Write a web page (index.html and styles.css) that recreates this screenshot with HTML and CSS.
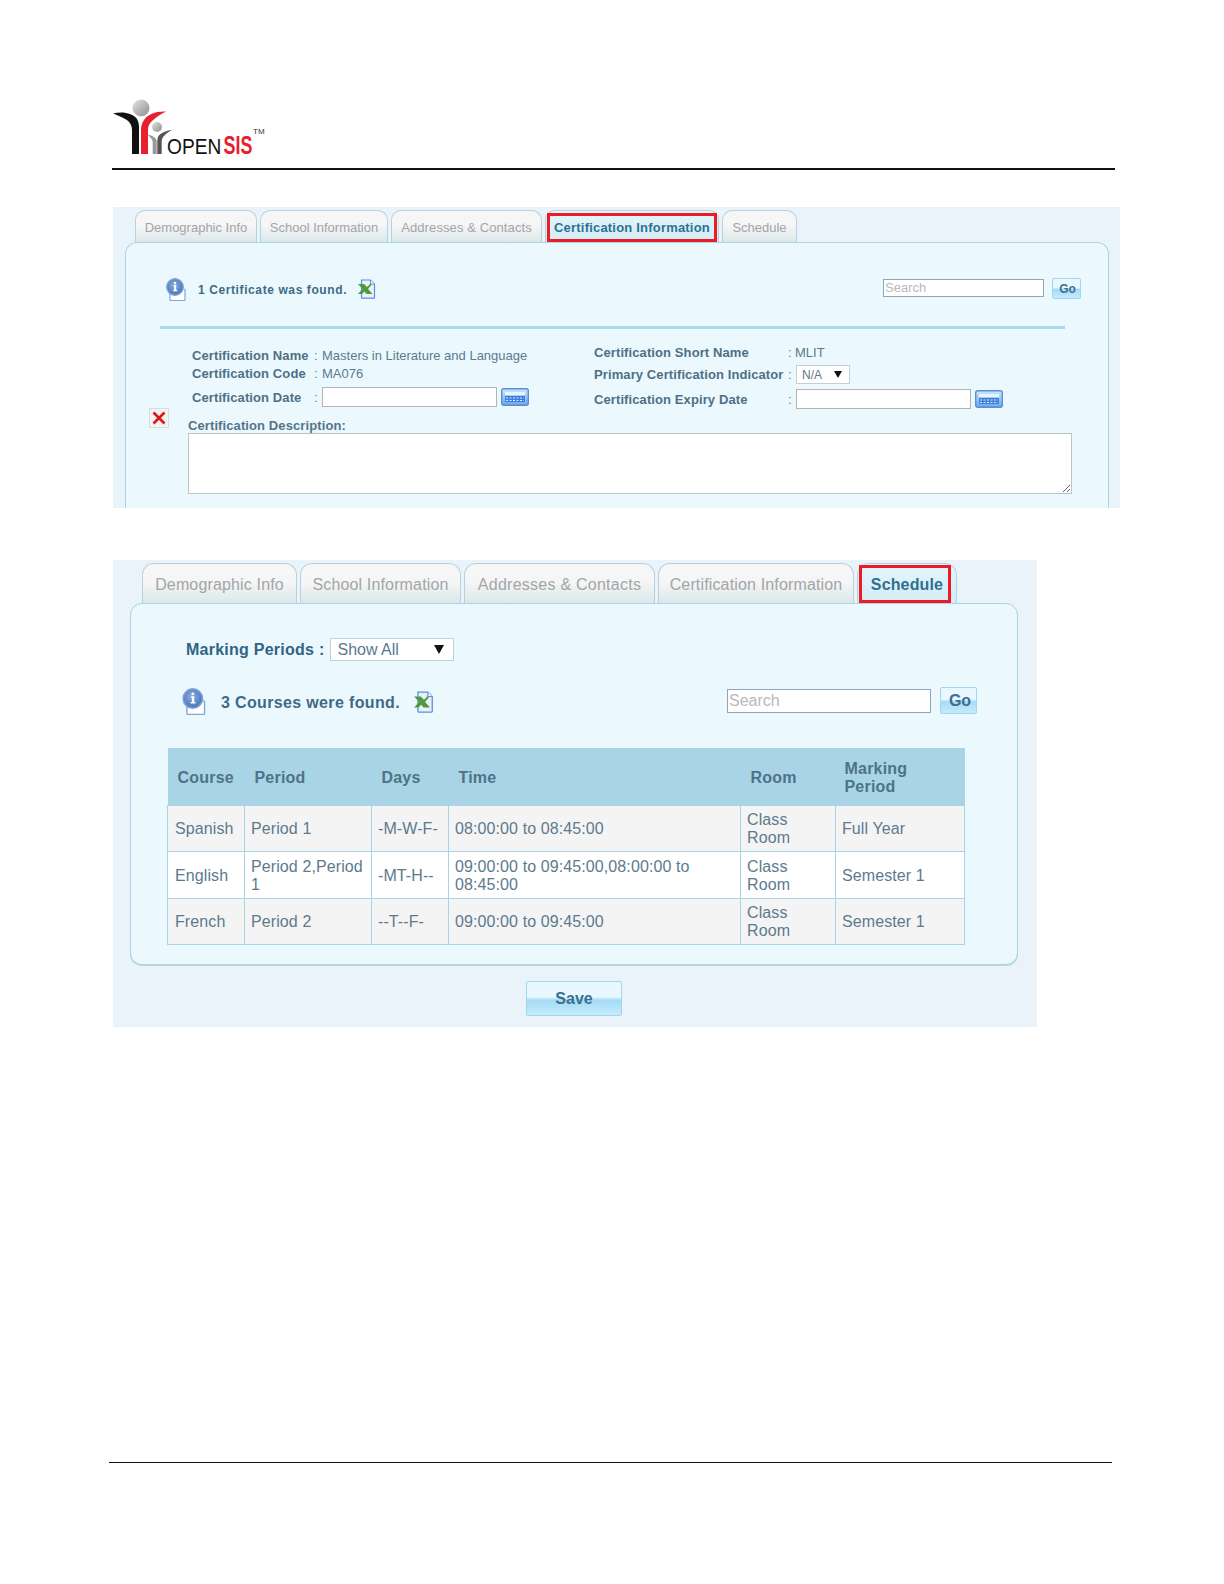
FILE: index.html
```html
<!DOCTYPE html>
<html lang="en">
<head>
<meta charset="utf-8">
<title>openSIS</title>
<link rel="stylesheet" href="styles.css">
</head>
<body>
<svg class="defs" width="0" height="0" aria-hidden="true">
  <defs>
    <linearGradient id="ball" x1="0" y1="0" x2="1" y2="1"><stop offset="0" stop-color="#e4e4e4"/><stop offset="1" stop-color="#8d8d8d"/></linearGradient>
    <radialGradient id="infoGrad" cx=".45" cy=".4" r=".65"><stop offset="0" stop-color="#8fb0e0"/><stop offset="1" stop-color="#3f6db4"/></radialGradient>
    <linearGradient id="calGrad" x1="0" y1="0" x2="0" y2="1"><stop offset="0" stop-color="#cfe6fb"/><stop offset="1" stop-color="#6aa8ec"/></linearGradient>
    <symbol id="i-info" viewBox="0 0 20 23">
      <path d="M4 11h14a1 1 0 0 1 1 1v9.500a1 1 0 0 1-1 1H5a1 1 0 0 1-1-1z" fill="#fff" stroke="#7fa8dc" stroke-width="1.200"/>
      <circle cx="9" cy="9" r="8.200" fill="url(#infoGrad)" stroke="#7e9fd2" stroke-width="1.400"/>
      <circle cx="9" cy="5" r="1.200" fill="#fff"/>
      <path d="M7.600 7h2.600v5h1v1.200H7.200V12h1V8.200h-.6z" fill="#fff"/>
    </symbol>
    <symbol id="i-excel" viewBox="0 0 18 20">
      <path d="M3.500 1h9l4 4v13.500a.7.7 0 0 1-.7.7H4.200a.7.7 0 0 1-.7-.7z" fill="#e8f1fb" stroke="#5f8fd6" stroke-width="1.200"/>
      <path d="M12.500 1v4h4" fill="#fff" stroke="#5f8fd6" stroke-width="1"/>
      <path d="M0 5h6l3 3 3-3h2l-4 5 4.500 5H8.500l-2-2.500L4 15H0l4.500-5z" fill="#4f9a3a"/>
    </symbol>
    <symbol id="i-cal" viewBox="0 0 28 18">
      <rect x=".7" y=".7" width="26.600" height="16.600" rx="2" fill="url(#calGrad)" stroke="#5a8fd6" stroke-width="1.400"/>
      <rect x="4" y="4" width="20" height="3" fill="#eaf4fc"/>
      <rect x="4" y="8" width="20" height="6" fill="#3f7fdc"/>
      <path d="M5 10h18M5 12.500h18" stroke="#dce9fb" stroke-width="1" stroke-dasharray="2 1.500"/>
    </symbol>
  </defs>
</svg>

<div class="page">
  <header class="logo-head">
    <svg class="logo" viewBox="0 0 155 62" width="155" height="62" role="img" aria-label="openSIS">
      <circle cx="28" cy="9" r="8.500" fill="url(#ball)"/>
      <path d="M0 14.500C9 12 20 14 24 20c1.500 2.500 2 5 2 9v26h-7V32c0-6-2-9-6-11.500C9 18 4 16 0 14.500z" fill="#111"/>
      <path d="M53 12.500C43 12 35 15 31 21c-2 3-3 6-3 10v24h7V31c0-4 1-6 4-9 3-3 8-6.500 14-9.500z" fill="#e8202e"/>
      <circle cx="44" cy="28" r="5" fill="url(#ball)"/>
      <path d="M34 36c4-.5 9 2 9.700 6v13h-4V43c-.2-3-2.700-5.500-5.700-7z" fill="#999"/>
      <path d="M59 31c-6 .5-12 3-14 7-.5 1-.7 3-.7 5v12h4.400V42c.3-4 4.300-8 10.300-11z" fill="#555"/>
      <text class="logo-open" transform="translate(54 55) scale(.87 1)">OPEN</text>
      <text class="logo-sis" transform="translate(110.500 55) scale(.69 1)">SIS</text>
      <text class="logo-tm" x="140" y="35">TM</text>
    </svg>
  </header>
  <div class="rule-top"></div>

  <section class="panel panel-cert">
    <nav class="tabs">
      <div class="tab t1">Demographic Info</div>
      <div class="tab t2">School Information</div>
      <div class="tab t3">Addresses &amp; Contacts</div>
      <div class="tab t4 active">Certification Information<span class="redbox"></span></div>
      <div class="tab t5">Schedule</div>
    </nav>
    <div class="card">
      <div class="found">
        <svg class="ic-info"><use href="#i-info"/></svg>
        <span class="found-text">1 Certificate was found.</span>
        <svg class="ic-excel"><use href="#i-excel"/></svg>
        <div class="search">
          <input class="search-input" type="text" placeholder="Search">
          <button class="go" type="button">Go</button>
        </div>
      </div>
      <div class="sep"></div>
      <div class="cert-body">
        <div class="x-col">
          <div class="x-btn"><svg viewBox="0 0 14 14" width="14" height="14"><path d="M1.500 1.500l11 11M12.500 1.500l-11 11" stroke="#e0141c" stroke-width="2.600"/></svg></div>
        </div>
        <div class="cert-main">
          <div class="cert-cols">
            <div class="col-left">
              <div class="f r1"><span class="lab">Certification Name</span><span class="colon">:</span><span class="val">Masters in Literature and Language</span></div>
              <div class="f r2"><span class="lab">Certification Code</span><span class="colon">:</span><span class="val">MA076</span></div>
              <div class="f r3"><span class="lab">Certification Date</span><span class="colon">:</span><input class="date" type="text"><svg class="ic-cal"><use href="#i-cal"/></svg></div>
            </div>
            <div class="col-right">
              <div class="f q1"><span class="lab">Certification Short Name</span><span class="colon">:</span><span class="val">MLIT</span></div>
              <div class="f q2"><span class="lab">Primary Certification Indicator</span><span class="colon">:</span><span class="select sel-sm">N/A<i class="tri"></i></span></div>
              <div class="f q3"><span class="lab">Certification Expiry Date</span><span class="colon">:</span><input class="date" type="text"><svg class="ic-cal"><use href="#i-cal"/></svg></div>
            </div>
          </div>
          <div class="desc-label">Certification Description:</div>
          <textarea class="desc" aria-label="Certification Description"></textarea>
        </div>
      </div>
    </div>
  </section>

  <section class="panel panel-sched">
    <nav class="tabs">
      <div class="tab t1">Demographic Info</div>
      <div class="tab t2">School Information</div>
      <div class="tab t3">Addresses &amp; Contacts</div>
      <div class="tab t4">Certification Information</div>
      <div class="tab t5 active">Schedule<span class="redbox"></span></div>
    </nav>
    <div class="card">
      <div class="marking"><span class="marking-label">Marking Periods :</span><span class="select sel-lg">Show All<i class="tri"></i></span></div>
      <div class="found">
        <svg class="ic-info"><use href="#i-info"/></svg>
        <span class="found-text">3 Courses were found.</span>
        <svg class="ic-excel"><use href="#i-excel"/></svg>
        <div class="search">
          <input class="search-input" type="text" placeholder="Search">
          <button class="go" type="button">Go</button>
        </div>
      </div>
      <table class="courses">
        <colgroup><col class="c1"><col class="c2"><col class="c3"><col class="c4"><col class="c5"><col class="c6"></colgroup>
        <thead>
          <tr><th>Course</th><th>Period</th><th>Days</th><th>Time</th><th>Room</th><th>Marking Period</th></tr>
        </thead>
        <tbody>
          <tr><td>Spanish</td><td>Period 1</td><td>-M-W-F-</td><td>08:00:00 to 08:45:00</td><td>Class Room</td><td>Full Year</td></tr>
          <tr><td>English</td><td>Period 2,Period 1</td><td>-MT-H--</td><td>09:00:00 to 09:45:00,08:00:00 to 08:45:00</td><td>Class Room</td><td>Semester 1</td></tr>
          <tr><td>French</td><td>Period 2</td><td>--T--F-</td><td>09:00:00 to 09:45:00</td><td>Class Room</td><td>Semester 1</td></tr>
        </tbody>
      </table>
    </div>
    <div class="save-row"><button class="save" type="button">Save</button></div>
  </section>

  <div class="rule-bottom"></div>
</div>
</body>
</html>
```

FILE: styles.css
```css
* { box-sizing: border-box; }
html, body { margin: 0; padding: 0; background: #fff; }
body { font-family: "Liberation Sans", Arial, sans-serif; color: #4a6a80; }
.defs { position: absolute; }
.page { width: 1224px; height: 1584px; overflow: hidden; }

/* header */
.logo-head { margin: 99px 0 0 113px; height: 57px; }
.logo { display: block; }
.logo-open { font: 400 22px "Liberation Sans", sans-serif; fill: #111; }
.logo-sis { font: 700 26px "Liberation Sans", sans-serif; fill: #e8202e; }
.logo-tm { font: 400 8px "Liberation Sans", sans-serif; fill: #333; }
.rule-top { margin: 12px 0 0 112px; width: 1003px; height: 2px; background: #111; }
.rule-bottom { margin: 435px 0 0 109px; width: 1003px; height: 1px; background: #111; }

/* panels */
.panel { margin-left: 113px; background: #eaf3f9; }
.panel-cert { margin-top: 37px; width: 1007px; height: 301px; padding: 3px 11px 0 12px; overflow: hidden; }
.panel-sched { margin-top: 52px; width: 924px; height: 467px; padding: 3px 19px 0 17px; }

.tabs { display: flex; position: relative; z-index: 1; margin-bottom: -1px; }
.tab {
  position: relative; display: flex; align-items: center; justify-content: center;
  background: linear-gradient(#f6f6f6 45%, #dce7ea);
  border: 1px solid #b4d3de; border-bottom: 1px solid #a8d4e6;
  border-radius: 10px 10px 0 0; color: #a3a5a6; white-space: nowrap;
}
.tab.active { background: linear-gradient(#e4f5fb, #d3ecf6); color: #2f7090; font-weight: 700; }
.redbox { position: absolute; border: 3px solid #ed1c24; }

.panel-cert .tabs { margin-left: 10px; gap: 3px; }
.panel-cert .tab { height: 33px; font-size: 13px; padding-top: 2px; }
.panel-cert .t1 { width: 122px; } .panel-cert .t2 { width: 128px; }
.panel-cert .t3 { width: 151px; letter-spacing: .1px; }
.panel-cert .t4 { width: 174px; letter-spacing: .2px; }
.panel-cert .t5 { width: 75px; }
.panel-cert .redbox { left: 1px; right: 1px; top: 2px; bottom: 0; }

.panel-sched .tabs { margin-left: 12px; gap: 3px; }
.panel-sched .tab { height: 41px; font-size: 16px; padding-top: 2px; letter-spacing: .15px; border-radius: 12px 12px 0 0; }
.panel-sched .t1 { width: 155px; } .panel-sched .t2 { width: 161px; }
.panel-sched .t3 { width: 191px; letter-spacing: .25px; } .panel-sched .t4 { width: 196px; }
.panel-sched .t5 { width: 100px; }
.panel-sched .redbox { left: 1px; right: 5px; top: 1px; bottom: 0; }

.card { background: #ebf9fe; border: 1px solid #a8d4e6; border-radius: 12px; }
.panel-cert .card { height: 300px; padding: 35px 27px 0 23px; border-bottom: 0; }
.panel-sched .card { height: 362px; padding: 34px 0 0 0; box-shadow: 0 1px 0 #b9d6e2; }

/* found row */
.found { display: flex; align-items: center; }
.found-text { font-weight: 700; white-space: nowrap; color: #3f6a86; margin-top: 2px; }
.search { margin-left: auto; display: flex; align-items: center; }
.search-input {
  display: block; border: 1px solid #8ea6bc; background: #fff; padding: 0 1px;
  font-family: "Liberation Sans", sans-serif; outline: 0;
}
.search-input::placeholder { color: #b9b9b9; opacity: 1; }
.go, .save {
  font-family: "Liberation Sans", sans-serif; font-weight: 700; color: #3a6f8f; cursor: pointer;
  border: 1px solid #9fd6f0; border-radius: 2px; padding: 0;
  background: linear-gradient(#e9f7fe 0 45%, #a4dcf7 55%, #c6ebfb);
}
.panel-cert .found { margin-left: 17px; height: 21px; }
.panel-cert .ic-info { width: 20px; height: 23px; flex: none; margin-top: 2px; }
.panel-cert .found-text { font-size: 12px; letter-spacing: .6px; margin-left: 12px; }
.panel-cert .ic-excel { width: 18px; height: 20px; margin-left: 11px; flex: none; }
.panel-cert .search-input { width: 161px; height: 18px; font-size: 13px; margin-bottom: 2px; }
.panel-cert .go { width: 29px; height: 21px; margin-left: 8px; font-size: 12px; padding-left: 2px; }

.sep { height: 3px; background: #aed8ec; margin: 27px 16px 0 11px; }

/* cert form */
.cert-body { display: flex; margin-top: 14px; }
.x-col { width: 39px; flex: none; padding-top: 65px; }
.x-btn {
  width: 20px; height: 20px; background: #f1f3f3; border: 1px solid #d9dcdc;
  display: flex; align-items: center; justify-content: center;
}
.cert-main { flex: 1; }
.cert-cols { display: flex; padding-left: 4px; height: 76px; }
.col-left { width: 402px; padding-top: 3px; }
.col-right { flex: 1; }
.f { display: flex; align-items: center; font-size: 13px; white-space: nowrap; }
.lab { font-weight: 700; color: #4f6f86; letter-spacing: .1px; }
.val { color: #5c7a8e; }
.colon { color: #5c7a8e; }
.col-left .lab { width: 122px; }
.col-left .colon { width: 8px; }
.r1 { height: 18px; }
.r2 { height: 19px; }
.r3 { height: 20px; margin-top: 4px; }
.col-right .lab { width: 194px; }
.col-right .colon { width: 8px; }
.col-right .q1 .colon { width: 7px; }
.q1 { height: 18px; }
.q2 { height: 19px; margin-top: 4px; }
.q3 { height: 20px; margin-top: 5px; }
.date { display: block; width: 175px; height: 20px; background: #fff; border: 1px solid #b4b4b4; outline: 0; padding: 0 2px; }
.ic-cal { width: 28px; height: 18px; margin-left: 4px; flex: none; }
.select {
  position: relative; display: flex; align-items: center;
  background: #fff; border: 1px solid #c5d0d6; color: #5c7a8e; flex: none;
}
.tri { position: absolute; width: 0; height: 0; border-style: solid; border-color: #111 transparent transparent; }
.sel-sm { width: 54px; height: 19px; padding-left: 5px; font-size: 12px; }
.sel-sm .tri { right: 7px; top: 5px; border-width: 7px 4px 0; }
.desc-label { font-size: 13px; font-weight: 700; letter-spacing: .1px; color: #55748a; height: 14px; line-height: 14px; }
.desc { display: block; width: 884px; height: 61px; background: #fff; border: 1px solid #bcc4c8; outline: 0; margin: 0; }

/* schedule */
.marking { display: flex; align-items: center; margin-left: 55px; height: 23px; }
.marking-label { font-size: 16px; font-weight: 700; letter-spacing: .25px; color: #2f6484; white-space: nowrap; }
.sel-lg { width: 124px; height: 23px; margin-left: 5px; padding-left: 7px; font-size: 16px; }
.sel-lg .tri { right: 9px; top: 6px; border-width: 9px 5px 0; }

.panel-sched .found { margin: 27px 40px 0 51px; height: 27px; }
.panel-sched .ic-info { width: 24px; height: 27px; flex: none; }
.panel-sched .found-text { font-size: 16px; letter-spacing: .35px; margin-left: 15px; }
.panel-sched .ic-excel { width: 20px; height: 22px; margin-left: 14px; flex: none; }
.panel-sched .search { margin-bottom: 2px; }
.panel-sched .search-input { width: 204px; height: 24px; font-size: 16px; }
.panel-sched .go { width: 37px; height: 27px; margin-left: 9px; font-size: 16px; padding-left: 3px; }

.courses {
  border-collapse: collapse; table-layout: fixed; width: 797px; margin: 33px 0 0 36px;
  font-size: 16px; line-height: 18px; color: #5c7a8e;
}
.c1 { width: 77px; } .c2 { width: 127px; } .c3 { width: 77px; }
.c4 { width: 292px; } .c5 { width: 95px; } .c6 { width: 129px; }
.courses th {
  height: 57px; background: #a8d4e6; color: #4f7288; font-weight: 700; text-align: left;
  padding: 3px 10px 0; border: 0; letter-spacing: .2px;
}
.courses th:first-child { padding-left: 10px; }
.courses th:last-child { padding-left: 9px; }
.courses td { height: 46.500px; padding: 2px 6px 0; border: 1px solid #a8d4e6; letter-spacing: .1px; }
.courses td:first-child { padding-left: 7px; }
.courses tbody tr:nth-child(odd) td { background: #f4f4f4; }
.courses tbody tr:nth-child(even) td { background: #fff; }

.save-row { width: 888px; display: flex; justify-content: center; margin-top: 16px; }
.save { width: 96px; height: 35px; font-size: 16px; }
```
